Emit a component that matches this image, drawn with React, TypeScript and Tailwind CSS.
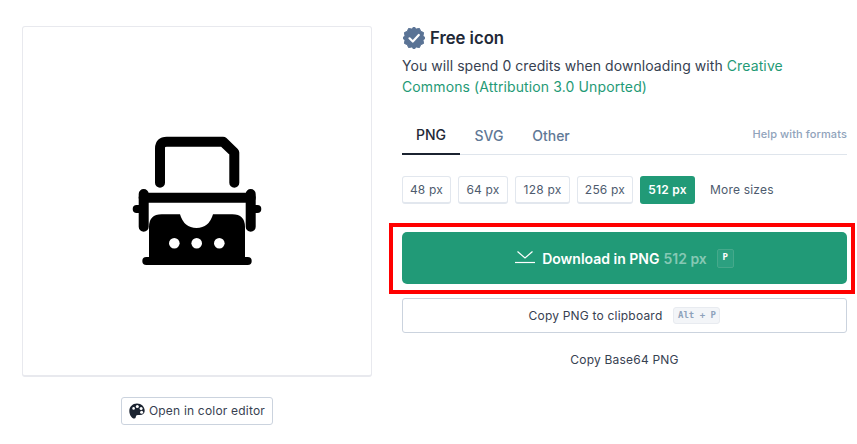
import React from "react";

function Printer() {
  return (
    <svg width="130" height="130" viewBox="0 0 130 130" fill="none">
      <g stroke="#000" strokeLinecap="round" strokeLinejoin="round">
        <path d="M28 46.7V12.5Q28 5.7 34.8 5.7H91L102.3 16.5V46.7" strokeWidth="10" />
        <path d="M11.7 61.7H118.7" strokeWidth="10" />
        <path d="M11.7 58V90.7M118.7 58V90.7" strokeWidth="10" />
        <path d="M4.7 73H10M120 73H125.3" strokeWidth="8" />
        <path d="M14.3 125H115.7" strokeWidth="8" />
      </g>
      <path d="M17 125V91Q17 78.3 29.7 78.3H48Q52 92 64.5 92Q77 92 81 78.3H100.3Q113 78.3 113 91V125Z" fill="#000" />
      <circle cx="42.3" cy="107.3" r="5.3" fill="#fff" />
      <circle cx="64.7" cy="107.3" r="5.3" fill="#fff" />
      <circle cx="87.3" cy="107.3" r="5.3" fill="#fff" />
    </svg>
  );
}

function Badge() {
  const pts: string[] = [];
  for (let i = 0; i < 24; i++) {
    const r = i % 2 === 0 ? 11 : 9.4;
    const a = (i * Math.PI) / 12;
    pts.push(`${11 + r * Math.sin(a)},${11 - r * Math.cos(a)}`);
  }
  return (
    <svg width="22" height="22" viewBox="0 0 22 22">
      <polygon points={pts.join(" ")} fill="#5a7395" stroke="#5a7395" strokeLinejoin="round" />
      <path d="M6.5 11.3L9.8 14.5L15.8 8" fill="none" stroke="#fff" strokeWidth="2.2" strokeLinecap="round" strokeLinejoin="round" />
    </svg>
  );
}

function Palette() {
  return (
    <svg width="16" height="16" viewBox="0 0 16 16">
      <path d="M8 0.5C3.6 0.5 0.3 3.8 0.3 8C0.3 12 3 15.6 5.3 15.6C7 15.6 6.6 13.6 7.2 12.8C7.9 11.8 9.3 12.1 11 12.1C13.9 12.1 15.7 10.3 15.7 7.8C15.7 3.6 12.4 0.5 8 0.5Z" fill="#1b2330" />
      <circle cx="8.3" cy="3.6" r="1.5" fill="#fff" />
      <circle cx="12.1" cy="5.6" r="1.5" fill="#fff" />
      <circle cx="12.6" cy="9.3" r="1.5" fill="#fff" />
      <circle cx="4.6" cy="5.4" r="1.3" fill="#fff" />
    </svg>
  );
}

function SizeBtn({ label, w }: { label: string; w: string }) {
  return (
    <div className={`${w} h-[28px] flex items-center justify-center rounded-[3px] border border-[#e2e7ee] border-b-2 bg-white text-[12px] tracking-[0.2px] text-[#4e5b6e]`}>
      {label}
    </div>
  );
}

export default function App() {
  return (
    <div className="w-[857px] h-[444px] bg-white overflow-hidden flex items-start pl-[22px] pt-[26px] font-['Inter',sans-serif] text-[#374151]">
      <div className="w-[350px] flex flex-col items-center">
        <div className="w-[350px] h-[351px] rounded-[3px] border border-[#e8e9ee] border-b-2 flex items-center justify-center">
          <Printer />
        </div>
        <div className="mt-[20px] w-[152px] h-[28px] flex items-center justify-center gap-[4px] rounded-[3px] border border-[#cbd3de] text-[12px] tracking-[0.2px] text-[#374151]">
          <Palette />
          <span>Open in color editor</span>
        </div>
      </div>

      <div className="ml-[30px] w-[445px] flex flex-col">
        <div className="flex items-center gap-[5px] h-[24px] pl-[1px]">
          <Badge />
          <span className="pt-[2px] text-[16.7px] font-semibold text-[#1f2937]">Free icon</span>
        </div>
        <p className="mt-[5px] text-[14px] leading-[21px] tracking-[0.06px] text-[#374151]">
          You will spend 0 credits when downloading with <span className="tracking-[0.12px] text-[#1f9a76]">Creative Commons (Attribution 3.0 Unported)</span>
        </p>
        <div className="mt-[21px] h-[37px] flex items-start border-b border-[#dfe5ec]">
          <div className="w-[58px] h-[37px] pb-[3px] flex items-center justify-center border-b-2 border-[#1b2330] text-[14px] font-medium text-[#1f2937]">PNG</div>
          <div className="w-[58px] h-[34px] flex items-center justify-center text-[14px] font-medium text-[#5f7896]">SVG</div>
          <div className="w-[66px] h-[34px] flex items-center justify-center text-[14px] font-medium text-[#5f7896]">Other</div>
          <div className="ml-auto h-[33px] flex items-center text-[11px] tracking-[0.1px] font-medium text-[#90a3bb]">Help with formats</div>
        </div>
        <div className="mt-[21px] flex items-center gap-[7px]">
          <SizeBtn label="48 px" w="w-[49px]" />
          <SizeBtn label="64 px" w="w-[50px]" />
          <SizeBtn label="128 px" w="w-[55px]" />
          <SizeBtn label="256 px" w="w-[56px]" />
          <div className="w-[55px] h-[28px] flex items-center justify-center rounded-[3px] bg-[#219a77] text-[12px] tracking-[0.2px] font-semibold text-white">512 px</div>
          <span className="ml-[8px] text-[12px] tracking-[0.2px] text-[#4e5b6e]">More sizes</span>
        </div>
        <div className="mt-[19px] -ml-[13px] -mr-[8px] border-[4px] border-[#ff0000] pl-[9px] pr-[4px] pt-[5px] pb-[6px]">
          <div className="h-[52px] rounded-[5px] bg-[#219a77] flex items-center justify-center text-[14px] font-semibold text-white">
            <svg width="20" height="14" viewBox="0 0 20 14" fill="none" stroke="#fff" strokeWidth="1.2" className="mr-[7px] -mt-[3px]">
              <path d="M2.5 1.5L10 8L17.5 1.5" />
              <path d="M0 12.5H20" />
            </svg>
            <span>Download in PNG</span>
            <span className="ml-[4px] text-[#86c8b4]">512 px</span>
            <span className="ml-[10px] w-[17px] h-[19px] flex items-center justify-center rounded-[2px] border border-[#45a98b] bg-[#2ca080] font-['DejaVu_Sans_Mono',monospace] text-[9px] font-bold text-white">P</span>
          </div>
        </div>
        <div className="mt-[4px] h-[35px] rounded-[3px] border border-[#cbd3de] flex items-center justify-center text-[12px] tracking-[0.2px] text-[#374151]">
          <span>Copy PNG to clipboard</span>
          <span className="ml-[11px] w-[47px] h-[17px] flex items-center justify-center rounded-[3px] bg-[#f3f5f8] border border-[#e8ebf0] font-['DejaVu_Sans_Mono',monospace] text-[9px] tracking-normal font-bold text-[#8ea2bb]">Alt + P</span>
        </div>
        <div className="mt-[17px] text-center text-[12px] tracking-[0.2px] leading-[20px] text-[#374151]">Copy Base64 PNG</div>
      </div>
    </div>
  );
}
